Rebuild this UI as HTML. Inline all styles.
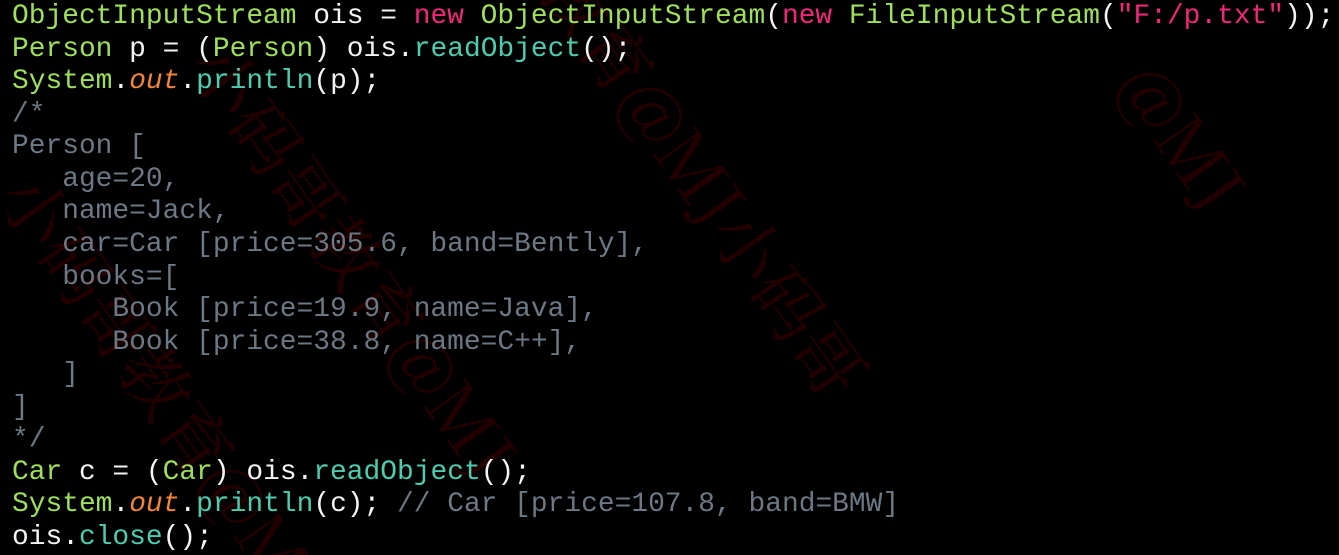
<!DOCTYPE html>
<html><head><meta charset="utf-8"><style>
html,body{margin:0;padding:0;background:#000;width:1339px;height:555px;overflow:hidden;position:relative}
pre{margin:0;position:absolute;left:12px;top:1px;font-family:"Liberation Mono","DejaVu Sans Mono",monospace;font-size:27.9px;line-height:32.56px;color:#f4f4f4;z-index:2}
.g{color:#9ee05a}.k{color:#f2277a}.t{color:#4ccdb0}.s{color:#f2277a}.o{color:#f2843a;font-style:italic}.c{color:#6c7884}
.wm{position:absolute;font-family:"Noto Serif CJK SC",serif;font-size:70px;color:#220000;transform:rotate(55deg);transform-origin:left top;white-space:nowrap;z-index:1}
</style></head><body>
<div class="wm" style="left:250px;top:20px">小码哥教育@MJ</div>
<div class="wm" style="left:60px;top:150px">小码哥教育@MJ</div>
<div class="wm" style="left:600px;top:-60px">教育@MJ小码哥</div>
<div class="wm" style="left:1180px;top:40px">@MJ</div>
<pre><span class="g">ObjectInputStream</span> ois = <span class="k">new</span> <span class="g">ObjectInputStream</span>(<span class="k">new</span> <span class="g">FileInputStream</span>(<span class="s">"F:/p.txt"</span>));
<span class="g">Person</span> p = (<span class="g">Person</span>) ois.<span class="t">readObject</span>();
<span class="g">System</span>.<span class="o">out</span>.<span class="t">println</span>(p);
<span class="c">/*
Person [
   age=20,
   name=Jack,
   car=Car [price=305.6, band=Bently],
   books=[
      Book [price=19.9, name=Java],
      Book [price=38.8, name=C++],
   ]
]
*/</span>
<span class="g">Car</span> c = (<span class="g">Car</span>) ois.<span class="t">readObject</span>();
<span class="g">System</span>.<span class="o">out</span>.<span class="t">println</span>(c); <span class="c">// Car [price=107.8, band=BMW]</span>
ois.<span class="t">close</span>();</pre>
</body></html>
